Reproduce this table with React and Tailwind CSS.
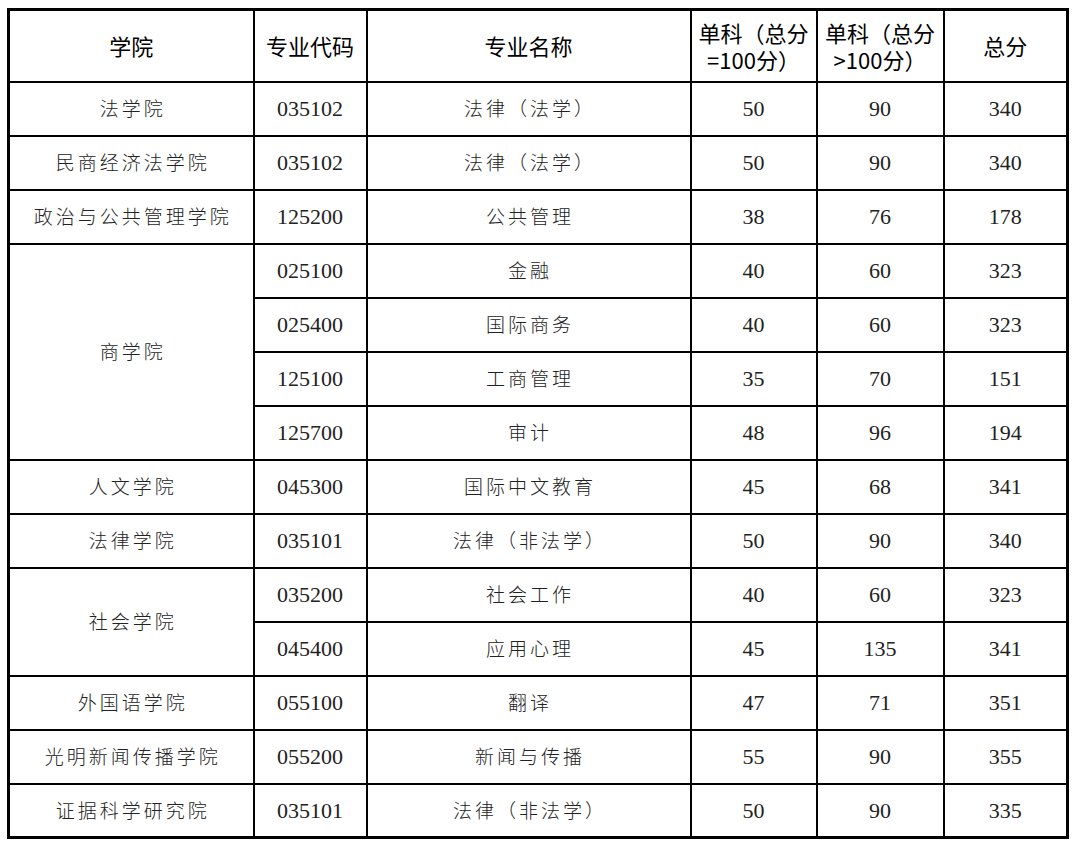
import React from 'react';

const rows = [
  ['法学院', '035102', '法律（法学）', '50', '90', '340'],
  ['民商经济法学院', '035102', '法律（法学）', '50', '90', '340'],
  ['政治与公共管理学院', '125200', '公共管理', '38', '76', '178'],
  ['商学院', '025100', '金融', '40', '60', '323', 4],
  [null, '025400', '国际商务', '40', '60', '323'],
  [null, '125100', '工商管理', '35', '70', '151'],
  [null, '125700', '审计', '48', '96', '194'],
  ['人文学院', '045300', '国际中文教育', '45', '68', '341'],
  ['法律学院', '035101', '法律（非法学）', '50', '90', '340'],
  ['社会学院', '035200', '社会工作', '40', '60', '323', 2],
  [null, '045400', '应用心理', '45', '135', '341'],
  ['外国语学院', '055100', '翻译', '47', '71', '351'],
  ['光明新闻传播学院', '055200', '新闻与传播', '55', '90', '355'],
  ['证据科学研究院', '035101', '法律（非法学）', '50', '90', '335'],
];

const cjk = "font-['Noto_Sans_CJK_SC',sans-serif]";
const th = `border-2 border-black text-center align-middle text-[22px] leading-[27px] font-normal text-black ${cjk}`;
const tdText = `border-2 border-black text-center align-middle text-[19px] font-light tracking-[3px] pl-[3px] text-[#222] ${cjk}`;
const tdNum = "border-2 border-black text-center align-middle text-[22px] text-[#222] font-['Liberation_Serif',serif]";

export default function App() {
  return (
    <div className="w-[1080px] h-[847px] bg-white pt-[8px] pl-[7px]">
      <table className="w-[1059px] table-fixed border-collapse border-[3px] border-black">
        <colgroup>
          <col className="w-[245px]" />
          <col className="w-[113px]" />
          <col className="w-[324px]" />
          <col className="w-[126px]" />
          <col className="w-[127px]" />
          <col className="w-[124px]" />
        </colgroup>
        <thead>
          <tr className="h-[72px]">
            <th className={th}>学院</th>
            <th className={th}>专业代码</th>
            <th className={th}>专业名称</th>
            <th className={th}>单科（总分<br />=100分）</th>
            <th className={th}>单科（总分<br />&gt;100分）</th>
            <th className={th}>总分</th>
          </tr>
        </thead>
        <tbody>
          {rows.map((r, i) => (
            <tr key={i} className="h-[54px]">
              {r[0] !== null && (
                <td className={tdText} rowSpan={r[6] || 1}>{r[0]}</td>
              )}
              <td className={tdNum}>{r[1]}</td>
              <td className={tdText}>{r[2]}</td>
              <td className={tdNum}>{r[3]}</td>
              <td className={tdNum}>{r[4]}</td>
              <td className={tdNum}>{r[5]}</td>
            </tr>
          ))}
        </tbody>
      </table>
    </div>
  );
}
